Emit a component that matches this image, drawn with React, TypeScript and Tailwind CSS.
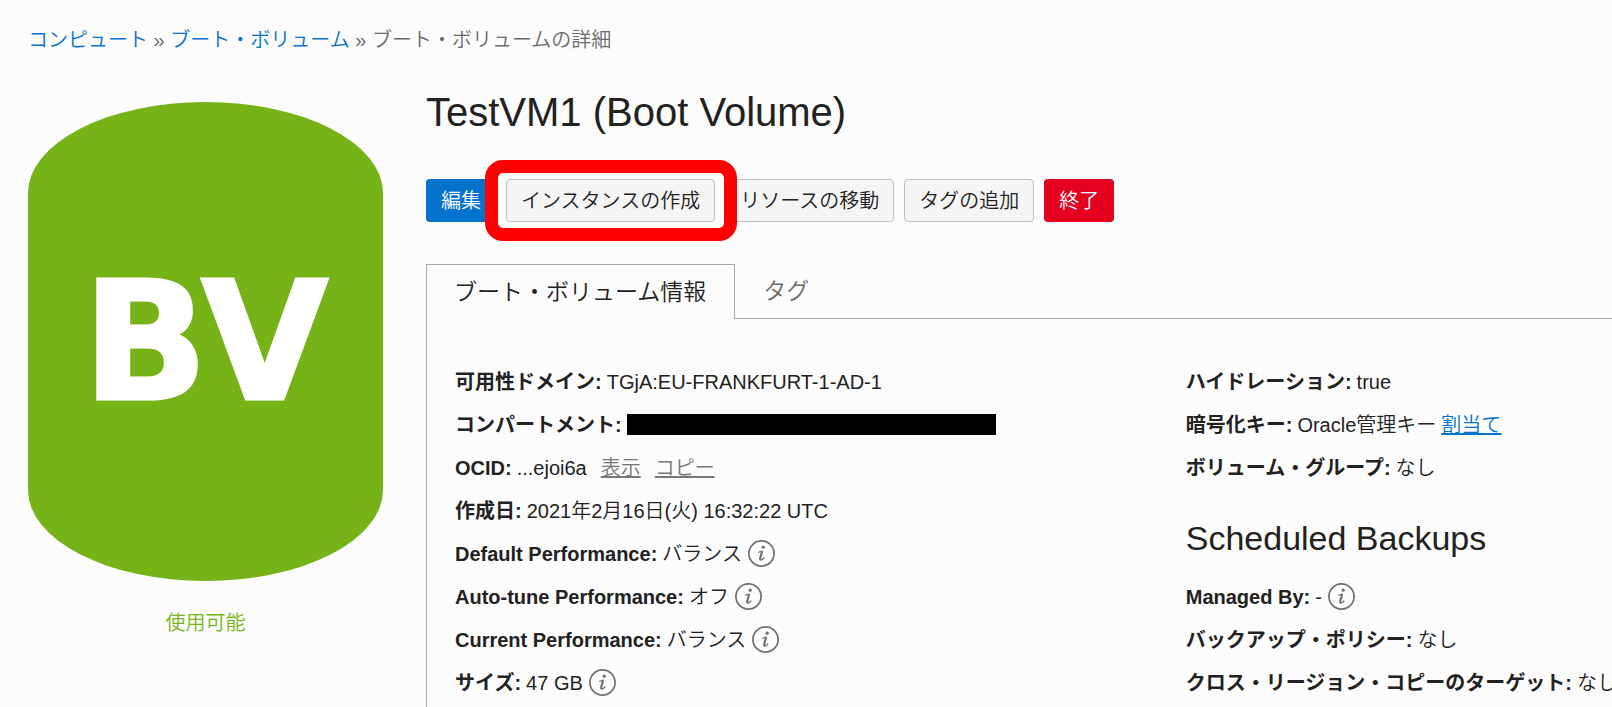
import type { ReactNode } from 'react';

function InfoButton({ label }: { label: string }) {
  return (
    <button type="button" aria-label={label} className="ml-1.5 shrink-0 text-[#707070]">
      <svg viewBox="0 0 27 27" fill="none" stroke="currentColor" className="block size-[27px]">
        <circle cx="13.5" cy="13.5" r="12.6" strokeWidth="1.7" />
        <circle cx="15.2" cy="7.2" r="1.6" fill="currentColor" stroke="none" />
        <path d="M10.6 12.3 14.2 11" strokeWidth="1.2" strokeLinecap="round" />
        <path d="M14.1 11.2 12.3 18c-.3 1.5.1 1.8.9 1.5" strokeWidth="2.2" />
        <path d="M13 19.8c1 0 2-.7 2.9-1.8" strokeWidth="1.2" strokeLinecap="round" />
      </svg>
    </button>
  );
}

function Row({ label, children }: { label: string; children: ReactNode }) {
  return (
    <div className="flex h-[43px] items-center whitespace-nowrap">
      <dt className="mr-[5px] font-bold">{label}:</dt>
      <dd className="flex items-center">{children}</dd>
    </div>
  );
}

const plainButton = 'h-[43px] rounded border border-[#b9bfc6] bg-[#f5f5f5] px-3.5 text-[#222]';

export default function App() {
  return (
    <div
      lang="ja"
      className="flex min-h-screen flex-col overflow-hidden bg-[#fcfcfc] pl-7 font-['Liberation_Sans','Noto_Sans_CJK_JP',sans-serif] text-xl leading-[30px] font-[350] text-[#222]"
    >
      <nav aria-label="パンくずリスト" className="pt-[25px] whitespace-nowrap text-[#6b6b6b]">
        <a href="#compute" className="text-[#0572ce]">コンピュート</a>
        {' » '}
        <a href="#boot-volumes" className="text-[#0572ce]">ブート・ボリューム</a>
        {' » '}
        <span>ブート・ボリュームの詳細</span>
      </nav>

      <div className="flex flex-1 gap-[43px] pt-8">
        <aside className="w-[355px] shrink-0 pt-[15px] text-center">
          <div className="flex h-[479px] items-center justify-center rounded-[50%/19%] bg-[#76b317] pt-0.5 font-['DejaVu_Sans',sans-serif] text-[164px] leading-none font-bold text-white [-webkit-text-stroke:3px_white]">
            BV
          </div>
          <p className="pt-[27px] text-[#76b317]">使用可能</p>
        </aside>

        <main className="flex min-w-0 flex-1 flex-col">
          <h1 className="text-[40px] leading-[50px]">TestVM1 (Boot Volume)</h1>

          <div className="flex gap-2.5 pt-[42px] whitespace-nowrap">
            <button type="button" className="h-[43px] rounded bg-[#0572ce] px-[15px] text-white">編集</button>
            <div className="relative">
              <button type="button" className={plainButton}>インスタンスの作成</button>
              <div className="pointer-events-none absolute -inset-y-[19px] -right-[22px] -left-[21px] rounded-[18px] border-[13px] border-[#ff0000]" />
            </div>
            <button type="button" className={plainButton}>リソースの移動</button>
            <button type="button" className={plainButton}>タグの追加</button>
            <button type="button" className="h-[43px] rounded bg-[#e5001f] px-[15px] text-white">終了</button>
          </div>

          <div role="tablist" className="flex pt-[42px] text-[23px] whitespace-nowrap">
            <button
              type="button"
              role="tab"
              aria-selected="true"
              className="h-[55px] border border-b-0 border-[#aaa] pr-7 pl-[27px]"
            >
              ブート・ボリューム情報
            </button>
            <div className="flex flex-1 border-b border-[#aaa]">
              <button type="button" role="tab" aria-selected="false" className="px-7 text-[#6b6b6b]">
                タグ
              </button>
            </div>
          </div>

          <div
            role="tabpanel"
            className="grid flex-1 grid-cols-[minmax(0,12fr)_minmax(0,7fr)] border-l border-[#aaa] pt-[41px] pl-7"
          >
            <dl>
              <Row label="可用性ドメイン">TGjA:EU-FRANKFURT-1-AD-1</Row>
              <Row label="コンパートメント">
                <span className="h-[21px] w-[369px] bg-black" />
              </Row>
              <Row label="OCID">
                ...ejoi6a
                <a href="#show" className="ml-3.5 text-[#777] underline">表示</a>
                <a href="#copy" className="ml-3.5 text-[#777] underline">コピー</a>
              </Row>
              <Row label="作成日">2021年2月16日(火) 16:32:22 UTC</Row>
              <Row label="Default Performance">
                バランス
                <InfoButton label="Default Performance" />
              </Row>
              <Row label="Auto-tune Performance">
                オフ
                <InfoButton label="Auto-tune Performance" />
              </Row>
              <Row label="Current Performance">
                バランス
                <InfoButton label="Current Performance" />
              </Row>
              <Row label="サイズ">
                47 GB
                <InfoButton label="サイズ" />
              </Row>
            </dl>

            <div>
              <dl>
                <Row label="ハイドレーション">true</Row>
                <Row label="暗号化キー">
                  Oracle管理キー
                  <a href="#assign" className="ml-[5px] text-[#0572ce] underline">割当て</a>
                </Row>
                <Row label="ボリューム・グループ">なし</Row>
              </dl>
              <h2 className="pt-[29px] pb-[17px] text-[34px] leading-10 whitespace-nowrap">Scheduled Backups</h2>
              <dl>
                <Row label="Managed By">
                  -
                  <InfoButton label="Managed By" />
                </Row>
                <Row label="バックアップ・ポリシー">なし</Row>
                <Row label="クロス・リージョン・コピーのターゲット">なし</Row>
              </dl>
            </div>
          </div>
        </main>
      </div>
    </div>
  );
}
